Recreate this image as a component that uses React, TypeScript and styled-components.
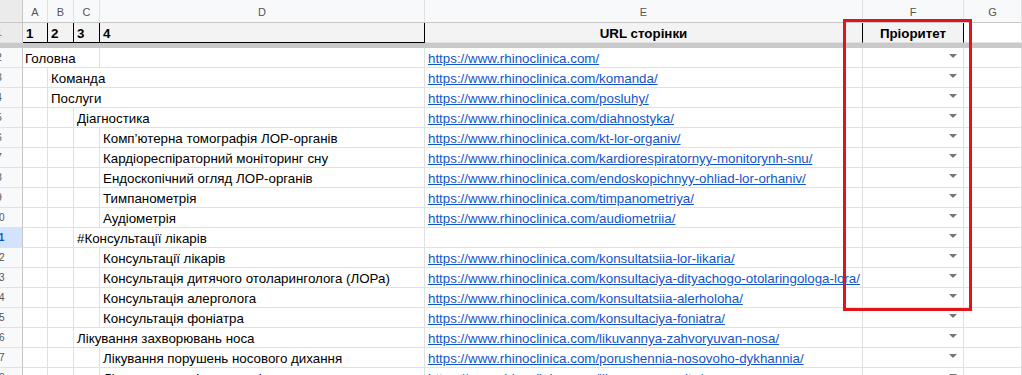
import React from 'react'
import styled, { createGlobalStyle } from 'styled-components'

const COLS = '23px 25px 26px 26px 325px 438px 101px 1fr'
const GRID = '#e1e1e1'

const GlobalStyle = createGlobalStyle`
  html, body {
    margin: 0;
    padding: 0;
    background: #ffffff;
    overflow: hidden;
  }
  body {
    font-family: "Liberation Sans", Arial, sans-serif;
    font-size: 13.333px;
    color: #000;
  }
`

type RowData = {
  n: number
  level: number
  span: number
  text: string
  url?: string
}

const rows: RowData[] = [
  { n: 2, level: 0, span: 3, text: 'Головна', url: 'https://www.rhinoclinica.com/' },
  { n: 3, level: 1, span: 3, text: 'Команда', url: 'https://www.rhinoclinica.com/komanda/' },
  { n: 4, level: 1, span: 3, text: 'Послуги', url: 'https://www.rhinoclinica.com/posluhy/' },
  { n: 5, level: 2, span: 2, text: 'Діагностика', url: 'https://www.rhinoclinica.com/diahnostyka/' },
  { n: 6, level: 3, span: 1, text: 'Комп’ютерна томографія ЛОР-органів', url: 'https://www.rhinoclinica.com/kt-lor-organiv/' },
  { n: 7, level: 3, span: 1, text: 'Кардіореспіраторний моніторинг сну', url: 'https://www.rhinoclinica.com/kardiorespiratornyy-monitorynh-snu/' },
  { n: 8, level: 3, span: 1, text: 'Ендоскопічний огляд ЛОР-органів', url: 'https://www.rhinoclinica.com/endoskopichnyy-ohliad-lor-orhaniv/' },
  { n: 9, level: 3, span: 1, text: 'Тимпанометрія', url: 'https://www.rhinoclinica.com/timpanometriya/' },
  { n: 10, level: 3, span: 1, text: 'Аудіометрія', url: 'https://www.rhinoclinica.com/audiometriia/' },
  { n: 11, level: 2, span: 2, text: '#Консультації лікарів' },
  { n: 12, level: 3, span: 1, text: 'Консультації лікарів', url: 'https://www.rhinoclinica.com/konsultatsiia-lor-likaria/' },
  { n: 13, level: 3, span: 1, text: 'Консультація дитячого отоларинголога (ЛОРа)', url: 'https://www.rhinoclinica.com/konsultaciya-dityachogo-otolaringologa-lora/' },
  { n: 14, level: 3, span: 1, text: 'Консультація алерголога', url: 'https://www.rhinoclinica.com/konsultatsiia-alerholoha/' },
  { n: 15, level: 3, span: 1, text: 'Консультація фоніатра', url: 'https://www.rhinoclinica.com/konsultaciya-foniatra/' },
  { n: 16, level: 2, span: 2, text: 'Лікування захворювань носа', url: 'https://www.rhinoclinica.com/likuvannya-zahvoryuvan-nosa/' },
  { n: 17, level: 3, span: 1, text: 'Лікування порушень носового дихання', url: 'https://www.rhinoclinica.com/porushennia-nosovoho-dykhannia/' },
  { n: 18, level: 3, span: 1, text: 'Лікування хронічного риніту', url: 'https://www.rhinoclinica.com/likuvannya-rynitu/' },
]

export default function App() {
  return (
    <>
      <GlobalStyle />
      <Sheet>
        <GridRow $h={23}>
          <Corner />
          {['A', 'B', 'C', 'D', 'E', 'F', 'G'].map(l => (
            <ColHead key={l}>{l}</ColHead>
          ))}
        </GridRow>

        <GridRow $h={20}>
          <RowNum $head><span>1</span></RowNum>
          <HeadCell $strong>1</HeadCell>
          <HeadCell $strong>2</HeadCell>
          <HeadCell $strong>3</HeadCell>
          <HeadCell $strong>4</HeadCell>
          <HeadCell $center>URL сторінки</HeadCell>
          <HeadCell $center>Пріоритет</HeadCell>
          <HeadCell $blank />
        </GridRow>

        <FreezeBar />

        {rows.map(r => (
          <GridRow key={r.n} $h={20}>
            <RowNum $selected={r.n === 11}><span>{r.n}</span></RowNum>
            {Array.from({ length: r.level }).map((_, i) => <Cell key={'pre' + i} />)}
            <Cell $span={r.span} $pad={r.level === 0 ? 2 : 3}>{r.text}</Cell>
            {Array.from({ length: 4 - r.level - r.span }).map((_, i) => <Cell key={'post' + i} />)}
            <Cell $pad={3}>{r.url && <Link>{r.url}</Link>}</Cell>
            <DropCell>
              <svg width="8" height="4" viewBox="0 0 8 4">
                <polygon points="0,0 8,0 4,4" fill="#767676" />
              </svg>
            </DropCell>
            <Cell />
          </GridRow>
        ))}

        <RedFrame />
      </Sheet>
    </>
  )
}

const Sheet = styled.div`
  position: relative;
  width: 1022px;
  height: 375px;
  overflow: hidden;
`
const GridRow = styled.div<{ $h: number }>`
  display: grid;
  grid-template-columns: ${COLS};
  height: ${p => p.$h}px;
`
const Corner = styled.div`
  background: #ebebeb;
  border-right: 1px solid #c7c7c7;
  border-bottom: 1px solid #c7c7c7;
`
const ColHead = styled.div`
  display: flex;
  align-items: center;
  justify-content: center;
  background: #f8f9fa;
  border-right: 1px solid ${GRID};
  border-bottom: 1px solid #c7c7c7;
  color: #555;
  font-size: 11px;
  padding-top: 1px;
  box-sizing: border-box;
`
const RowNum = styled.div<{ $selected?: boolean; $head?: boolean }>`
  overflow: hidden;
  display: flex;
  align-items: center;
  box-sizing: border-box;
  background: ${p => (p.$selected ? '#d3e3fd' : p.$head ? '#ebebeb' : '#f8f9fa')};
  border-right: 1px solid #c7c7c7;
  border-bottom: 1px solid ${GRID};
  color: ${p => (p.$selected ? '#0b57d0' : p.$head ? '#1a73e8' : '#555')};
  font-size: 10px;
  font-weight: ${p => (p.$selected ? 'bold' : 'normal')};
  span {
    display: block;
    flex: none;
    width: 46px;
    margin-left: -24px;
    text-align: center;
  }
`
const HeadCell = styled.div<{ $strong?: boolean; $center?: boolean; $blank?: boolean }>`
  display: flex;
  align-items: flex-end;
  justify-content: ${p => (p.$center ? 'center' : 'flex-start')};
  box-sizing: border-box;
  padding: 0 0 1px ${p => (p.$center ? 0 : 3)}px;
  background: ${p => (p.$blank ? '#fff' : '#f3f3f3')};
  border-right: 1px solid ${p => (p.$blank ? GRID : '#000')};
  border-bottom: 1px solid ${p => (p.$strong ? '#000' : GRID)};
  font-weight: bold;
  line-height: 15px;
  white-space: nowrap;
`
const FreezeBar = styled.div`
  height: 5px;
  background: #c9c9c9;
`
const Cell = styled.div<{ $span?: number; $pad?: number }>`
  grid-column: span ${p => p.$span || 1};
  display: flex;
  align-items: flex-end;
  box-sizing: border-box;
  padding: 0 0 1px ${p => p.$pad || 0}px;
  border-right: 1px solid ${GRID};
  border-bottom: 1px solid ${GRID};
  line-height: 15px;
  white-space: nowrap;
  overflow: visible;
`
const Link = styled.span`
  color: #1155cc;
  text-decoration: underline;
`
const DropCell = styled.div`
  display: flex;
  align-items: flex-start;
  justify-content: flex-end;
  box-sizing: border-box;
  padding: 6px 6px 0 0;
  border-right: 1px solid ${GRID};
  border-bottom: 1px solid ${GRID};
  svg {
    display: block;
  }
`
const RedFrame = styled.div`
  position: absolute;
  left: 843px;
  top: 19px;
  width: 129px;
  height: 292px;
  box-sizing: border-box;
  border: 3px solid #e0151c;
  pointer-events: none;
`
